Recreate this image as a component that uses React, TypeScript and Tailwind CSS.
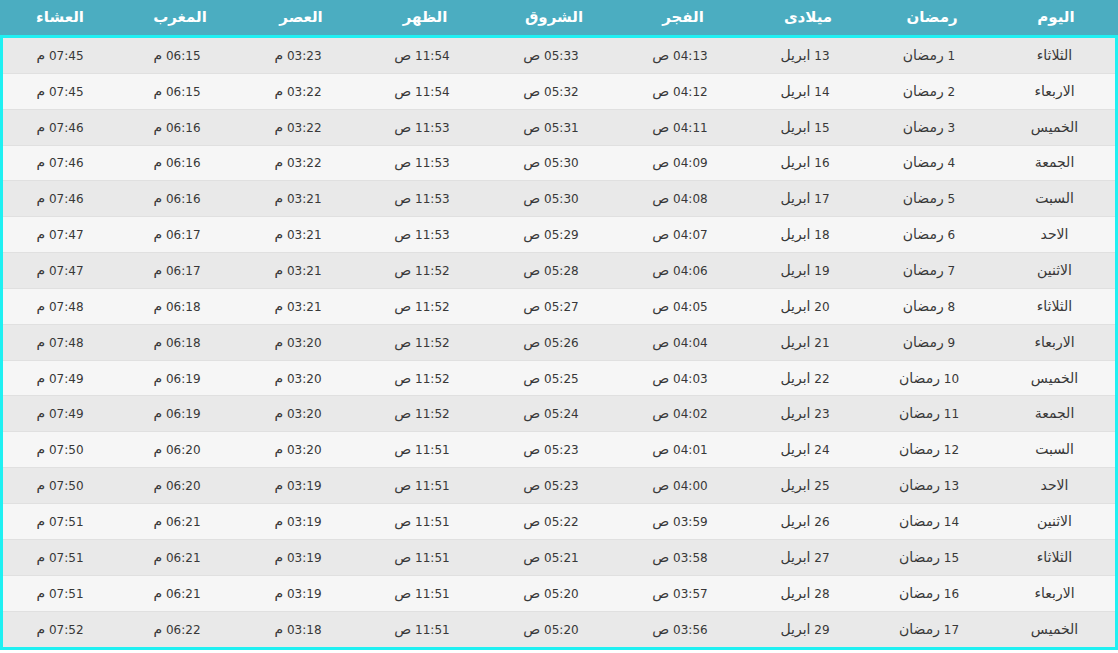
const days = ["الثلاثاء", "الاربعاء", "الخميس", "الجمعة", "السبت", "الاحد", "الاثنين"];

const fajr = ["04:13", "04:12", "04:11", "04:09", "04:08", "04:07", "04:06", "04:05", "04:04", "04:03", "04:02", "04:01", "04:00", "03:59", "03:58", "03:57", "03:56"];
const shurooq = ["05:33", "05:32", "05:31", "05:30", "05:30", "05:29", "05:28", "05:27", "05:26", "05:25", "05:24", "05:23", "05:23", "05:22", "05:21", "05:20", "05:20"];
const dhuhr = ["11:54", "11:54", "11:53", "11:53", "11:53", "11:53", "11:52", "11:52", "11:52", "11:52", "11:52", "11:51", "11:51", "11:51", "11:51", "11:51", "11:51"];
const asr = ["03:23", "03:22", "03:22", "03:22", "03:21", "03:21", "03:21", "03:21", "03:20", "03:20", "03:20", "03:20", "03:19", "03:19", "03:19", "03:19", "03:18"];
const maghrib = ["06:15", "06:15", "06:16", "06:16", "06:16", "06:17", "06:17", "06:18", "06:18", "06:19", "06:19", "06:20", "06:20", "06:21", "06:21", "06:21", "06:22"];
const isha = ["07:45", "07:45", "07:46", "07:46", "07:46", "07:47", "07:47", "07:48", "07:48", "07:49", "07:49", "07:50", "07:50", "07:51", "07:51", "07:51", "07:52"];

const headers = ["اليوم", "رمضان", "ميلادى", "الفجر", "الشروق", "الظهر", "العصر", "المغرب", "العشاء"];
const cols = "grid-cols-[124px_124px_124px_126px_132px_126px_122px_120px_1fr]";

// a cell is a number (or time) followed by an arabic word
type Cell = [string, string];

function Ar({ children }: { children: string }) {
	return <span className="text-[14px]">{children}</span>;
}

export default function App() {
	const rows: Cell[][] = fajr.map((_, i) => [
		["", days[i % 7]],
		[`${i + 1}`, "رمضان"],
		[`${i + 13}`, "ابريل"],
		[fajr[i], "ص"],
		[shurooq[i], "ص"],
		[dhuhr[i], "ص"],
		[asr[i], "م"],
		[maghrib[i], "م"],
		[isha[i], "م"],
	]);

	return (
		<div dir="rtl" className="w-[1118px] h-[653px] bg-white font-['DejaVu_Sans',sans-serif]">
			<div className={`grid ${cols} h-[35px] bg-[#4badc1] items-center text-white font-bold text-[15px]`}>
				{headers.map((h) => (
					<div key={h} className="text-center">
						{h}
					</div>
				))}
			</div>
			<div className="border-[3px] border-[#1ff0f2]">
				{rows.map((r, i) => (
					<div
						key={i}
						className={`grid ${cols} h-[35.85px] items-center text-[12px] text-[#383838] ${
							i % 2 === 0 ? "bg-[#e9e9e9]" : "bg-[#f6f6f6]"
						} border-b border-[#e0e0e0] last:border-b-0`}
					>
						{r.map(([n, w], j) => (
							<div key={j} className={`text-center ${j === 0 ? "-mr-[3px]" : ""}`}>
								{n && <span>{n} </span>}
								<Ar>{w}</Ar>
							</div>
						))}
					</div>
				))}
			</div>
		</div>
	);
}
